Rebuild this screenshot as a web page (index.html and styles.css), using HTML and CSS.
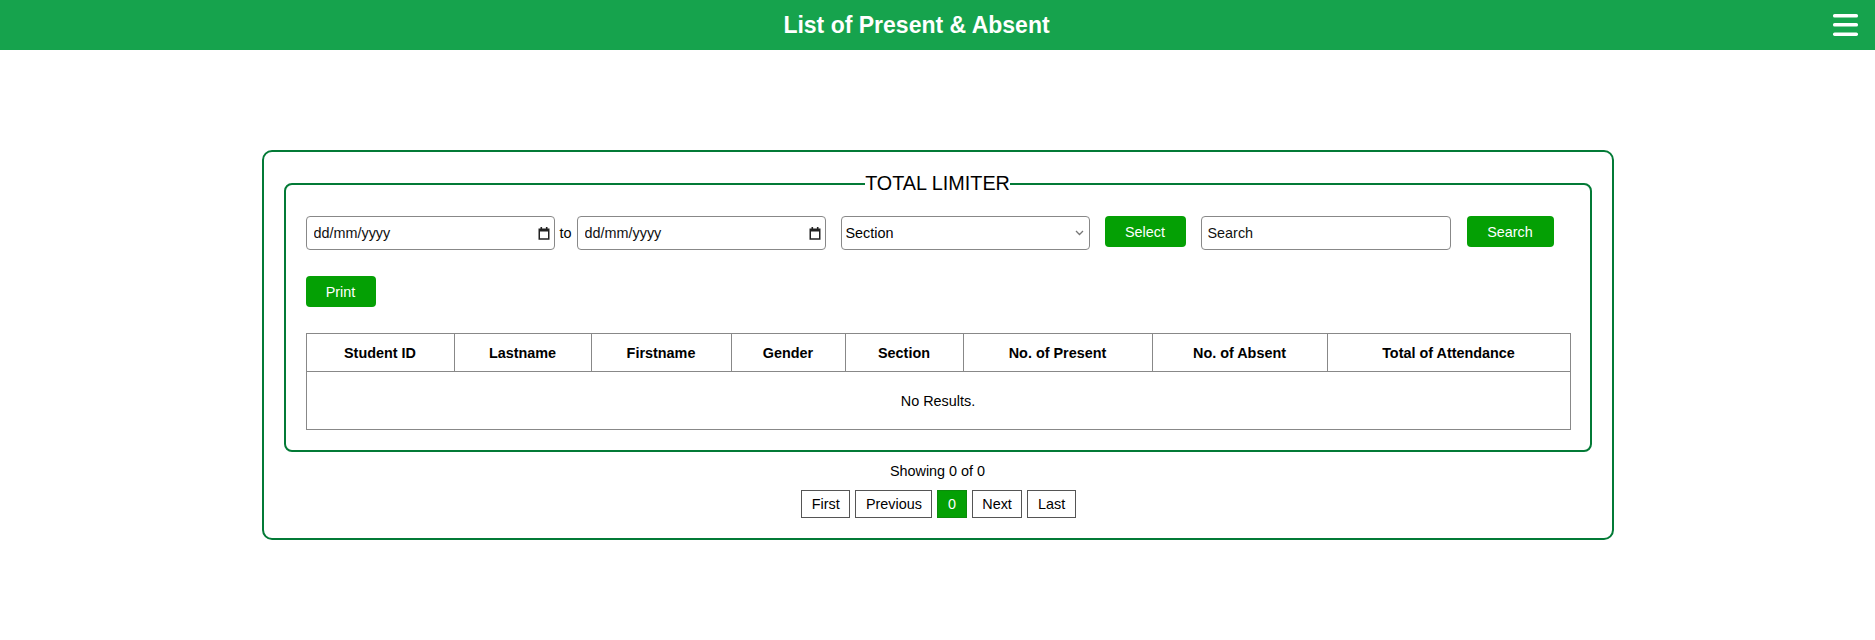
FILE: index.html
```html
<!DOCTYPE html>
<html lang="en">
<head>
<meta charset="utf-8">
<title>List of Present &amp; Absent</title>
<link rel="stylesheet" href="styles.css">
</head>
<body>
<header class="topbar">
  <h1 class="title">List of Present &amp; Absent</h1>
  <button class="menu-btn" type="button" aria-label="Menu">
    <svg width="25" height="22" viewBox="0 0 25 22">
      <rect x="0" y="0" width="25" height="3.5" rx="1.6" fill="#fff"/>
      <rect x="0" y="9" width="25" height="3.5" rx="1.6" fill="#fff"/>
      <rect x="0" y="18.4" width="25" height="3.5" rx="1.6" fill="#fff"/>
    </svg>
  </button>
</header>

<main class="panel">
  <fieldset class="limiter">
    <legend class="legend">TOTAL LIMITER</legend>
    <div class="filters">
      <div class="field date-field">
        <input class="date-input" type="text" placeholder="dd/mm/yyyy">
        <svg class="cal" width="12" height="13" viewBox="0 0 12 13">
          <rect x="2.5" y="0" width="1.6" height="2" fill="#222"/>
          <rect x="7.9" y="0" width="1.6" height="2" fill="#222"/>
          <path d="M0.5 1.6h11v11.2h-11z M2 4.6h8v6.7h-8z" fill="#222" fill-rule="evenodd"/>
        </svg>
      </div>
      <span class="to">to</span>
      <div class="field date-field">
        <input class="date-input" type="text" placeholder="dd/mm/yyyy">
        <svg class="cal" width="12" height="13" viewBox="0 0 12 13">
          <rect x="2.5" y="0" width="1.6" height="2" fill="#222"/>
          <rect x="7.9" y="0" width="1.6" height="2" fill="#222"/>
          <path d="M0.5 1.6h11v11.2h-11z M2 4.6h8v6.7h-8z" fill="#222" fill-rule="evenodd"/>
        </svg>
      </div>
      <div class="select-wrap spaced">
        <select class="field select">
          <option>Section</option>
        </select>
        <svg class="chev" width="9" height="6" viewBox="0 0 9 6">
          <path d="M1 1l3.5 3.5L8 1" fill="none" stroke="#777" stroke-width="1.3"/>
        </svg>
      </div>
      <button class="btn btn-select spaced" type="button">Select</button>
      <input class="field text-input spaced" type="text" placeholder="Search">
      <button class="btn btn-search spaced" type="button">Search</button>
    </div>
    <div class="actions">
      <button class="btn btn-print" type="button">Print</button>
    </div>
    <table class="grid">
      <thead>
        <tr>
          <th class="c1">Student ID</th>
          <th class="c2">Lastname</th>
          <th class="c3">Firstname</th>
          <th class="c4">Gender</th>
          <th class="c5">Section</th>
          <th class="c6">No. of Present</th>
          <th class="c7">No. of Absent</th>
          <th class="c8">Total of Attendance</th>
        </tr>
      </thead>
      <tbody>
        <tr>
          <td class="empty" colspan="8">No Results.</td>
        </tr>
      </tbody>
    </table>
  </fieldset>
  <div class="showing">Showing 0 of 0</div>
  <nav class="pager">
    <span class="page">First</span>
    <span class="page">Previous</span>
    <span class="page active">0</span>
    <span class="page">Next</span>
    <span class="page">Last</span>
  </nav>
</main>
</body>
</html>
```

FILE: styles.css
```css
body {
  margin: 0;
  font-family: "Liberation Sans", Arial, sans-serif;
  color: #000;
  background: #fff;
}

.topbar {
  height: 50px;
  background: #16a34d;
  display: flex;
  align-items: center;
}

.title {
  flex: 1;
  margin: 0;
  text-align: center;
  color: #fff;
  font-size: 23px;
  font-weight: bold;
}

.menu-btn {
  width: 25px;
  height: 22px;
  margin: 0 17px 1px 0;
  padding: 0;
  border: 0;
  background: none;
  display: flex;
}

.panel {
  box-sizing: border-box;
  width: 1352px;
  margin: 100px auto 0;
  border: 2px solid #037a36;
  border-radius: 10px;
  padding: 20px;
}

.limiter {
  margin: 0;
  min-width: 0;
  border: 2px solid #037a36;
  border-radius: 8px;
  padding: 21px 20px 20px;
}

.legend {
  margin: 0 auto;
  padding: 0;
  font-size: 19.8px;
  color: #000;
}

.filters {
  display: flex;
  align-items: flex-start;
}

.field {
  box-sizing: border-box;
  width: 249px;
  height: 34px;
  border: 1px solid #888;
  border-radius: 4px;
  background: #fff;
  font-family: "Liberation Sans", Arial, sans-serif;
  font-size: 14.4px;
  color: #000;
}

.date-field {
  display: flex;
  align-items: center;
  padding: 0 4px 0 7px;
}

.date-input {
  flex: 1;
  min-width: 0;
  border: 0;
  padding: 0;
  outline: none;
  background: transparent;
  font-family: "Liberation Sans", Arial, sans-serif;
  font-size: 14.4px;
  color: #000;
}

.date-input::placeholder,
.text-input::placeholder {
  color: #111;
  opacity: 1;
}

.cal {
  flex: none;
}

.text-input {
  width: 250px;
  padding: 0 6px;
}

.select-wrap {
  position: relative;
  display: flex;
}

.select {
  appearance: none;
  -webkit-appearance: none;
  padding: 0 20px 0 4px;
}

.chev {
  position: absolute;
  right: 6px;
  top: 14px;
  pointer-events: none;
}

.to {
  line-height: 34px;
  margin: 0 5px;
  font-size: 14.4px;
}

.spaced {
  margin-left: 15px;
}

.btn {
  box-sizing: border-box;
  height: 31px;
  background: #04a004;
  color: #fff;
  border: 0;
  border-radius: 4px;
  padding: 0;
  text-align: center;
  font-family: "Liberation Sans", Arial, sans-serif;
  font-size: 14.4px;
  line-height: normal;
}

.btn-select { width: 81px; }
.btn-search { width: 87px; margin-left: 16px; }
.btn-print { width: 70px; }

.actions {
  margin-top: 26px;
}

.grid {
  width: 100%;
  margin-top: 26px;
  border-collapse: collapse;
  table-layout: fixed;
  font-size: 14.4px;
}

.grid th,
.grid td {
  box-sizing: border-box;
  border: 1px solid #888;
  text-align: center;
}

.grid th {
  padding: 10.5px 4px;
  font-weight: bold;
}

.grid td.empty {
  padding: 20.5px;
}

.c1 { width: 148px; }
.c2 { width: 137px; }
.c3 { width: 140px; }
.c4 { width: 114px; }
.c5 { width: 118px; }
.c6 { width: 189px; }
.c7 { width: 175px; }
.c8 { width: 243px; }

.showing {
  margin-top: 11px;
  text-align: center;
  font-size: 14.4px;
}

.pager {
  display: flex;
  justify-content: center;
  gap: 5px;
  margin-top: 11px;
  padding-left: 2px;
}

.page {
  border: 1px solid #555;
  padding: 5px 9.6px;
  font-size: 14.4px;
  line-height: normal;
  background: #fff;
  color: #000;
}

.page.active {
  background: #04a004;
  border-color: #0b8a0b;
  color: #fff;
}
```
